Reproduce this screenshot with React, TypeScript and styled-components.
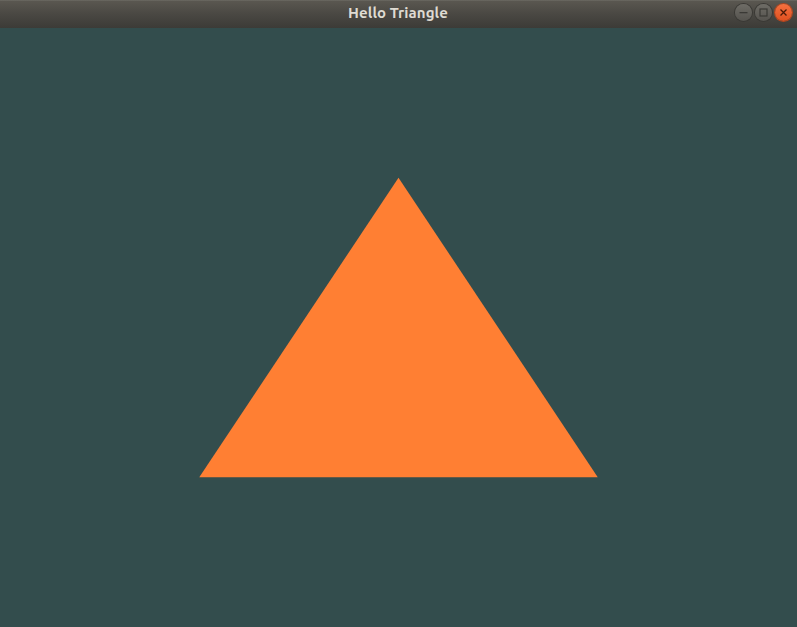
import React from "react";
import styled, { createGlobalStyle } from "styled-components";

const Global = createGlobalStyle`
  html, body { margin: 0; padding: 0; width: 797px; height: 627px; overflow: hidden; background: #334d4d; }
  #root { width: 797px; height: 627px; }
`;

const Window = styled.div`
  width: 797px;
  height: 627px;
  display: flex;
  flex-direction: column;
`;

const TitleBar = styled.div`
  height: 28px;
  flex: 0 0 28px;
  position: relative;
  display: flex;
  align-items: center;
  justify-content: center;
  background: linear-gradient(to bottom, #5b5851 0%, #4a4843 50%, #3c3b37 100%);
  box-shadow: inset 0 1px 0 rgba(255, 255, 255, 0.08);
`;

const Title = styled.span`
  font-family: "Ubuntu", "DejaVu Sans", "Noto Sans", sans-serif;
  font-weight: bold;
  font-size: 15px;
  color: #dfdbd2;
  letter-spacing: 0.1px;
  margin-top: -3px;
  margin-left: -1px;
`;

const Controls = styled.div`
  position: absolute;
  right: 5px;
  top: 4px;
  display: flex;
  gap: 3px;
`;

const Btn = styled.div<{ $close?: boolean }>`
  width: 17px;
  height: 17px;
  border-radius: 50%;
  display: flex;
  align-items: center;
  justify-content: center;
  background: ${(p) =>
    p.$close
      ? "linear-gradient(to bottom, #f5703f, #e0501f)"
      : "linear-gradient(to bottom, #6e6c66, #55534e)"};
  box-shadow: 0 0 0 1px ${(p) => (p.$close ? "#b8451c" : "#3a3935")};
`;

const Canvas = styled.div`
  flex: 1;
  background: #334d4d;
  display: block;
`;

const Surface = styled.svg`
  display: block;
  width: 797px;
  height: 599px;
`;

export default function App() {
  return (
    <>
      <Global />
      <Window>
        <TitleBar>
          <Title>Hello Triangle</Title>
          <Controls>
            <Btn>
              <svg width="9" height="9" viewBox="0 0 9 9">
                <rect x="0.5" y="4" width="8" height="1.3" fill="#3a3935" />
              </svg>
            </Btn>
            <Btn>
              <svg width="9" height="9" viewBox="0 0 9 9">
                <rect x="1" y="1" width="7" height="7" fill="none" stroke="#3a3935" strokeWidth="1.2" />
              </svg>
            </Btn>
            <Btn $close>
              <svg width="9" height="9" viewBox="0 0 9 9">
                <path d="M1.5 1.5 L7.5 7.5 M7.5 1.5 L1.5 7.5" stroke="#4a1a08" strokeWidth="1.3" />
              </svg>
            </Btn>
          </Controls>
        </TitleBar>
        <Canvas>
          <Surface viewBox="0 0 797 599">
            <polygon points="398.5,149.75 199.25,449.25 597.75,449.25" fill="#ff7f33" />
          </Surface>
        </Canvas>
      </Window>
    </>
  );
}
